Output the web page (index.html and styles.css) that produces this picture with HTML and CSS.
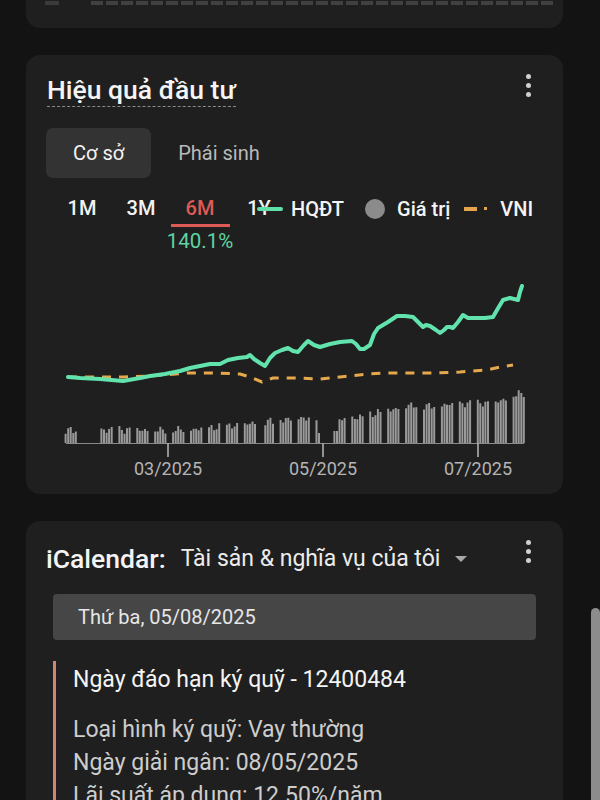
FILE: index.html
```html
<!DOCTYPE html>
<html lang="vi">
<head>
<meta charset="utf-8">
<title>Hiệu quả đầu tư</title>
<link rel="stylesheet" href="styles.css">
</head>
<body>
<div class="page">
  <section class="card card-prev">
    <div class="prev-strip"><span class="strip-a"></span><span class="strip-b"></span></div>
  </section>

  <section class="card perf">
    <div class="card-head">
      <h2 class="title">Hiệu quả đầu tư</h2>
      <div class="kebab"><i></i><i></i><i></i></div>
    </div>
    <div class="tabs">
      <div class="tab active">Cơ sở</div>
      <div class="tab">Phái sinh</div>
    </div>
    <div class="periods">
      <div class="period"><div class="lbl">1M</div></div>
      <div class="period"><div class="lbl">3M</div></div>
      <div class="period active"><div class="lbl">6M</div><div class="pct">140.1%</div></div>
      <div class="period"><div class="lbl">1Y</div></div>
      <div class="legend">
        <span class="lg-line"></span><span class="lg-text">HQĐT</span>
        <span class="lg-dot"></span><span class="lg-text">Giá trị</span>
        <span class="lg-dash"></span><span class="lg-small"></span><span class="lg-text">VNI</span>
      </div>
    </div>
    <svg class="chart" width="537" height="227" viewBox="26 253 537 227">
      <path id="bars" class="bars" d=""/>
      <line class="axis" x1="66" y1="443.5" x2="524" y2="443.5"/>
      <line class="tick" x1="168" y1="443" x2="168" y2="457"/>
      <line class="tick" x1="323" y1="443" x2="323" y2="457"/>
      <line class="tick" x1="478" y1="443" x2="478" y2="457"/>
      <text class="axis-label" x="168" y="475">03/2025</text>
      <text class="axis-label" x="323" y="475">05/2025</text>
      <text class="axis-label" x="478" y="475">07/2025</text>
      <polyline class="vni" points="68,377 100,377 123,377 150,376 187,373 215,373 240,374 250,377 262,382 273,378 300,378 320,379 340,377 367,374 387,373 410,373 433,373 460,372 487,370 500,367 513,365"/>
      <polyline class="hqdt" points="68,377 80,378 100,379 123,381 140,378 150,376 165,374 180,371 190,368 200,366 210,364 220,364 228,360 238,358 247,357 250,355 254,359 260,363 265,366 270,358 275,353 282,350 288,348 293,351 298,352 304,345 308,341 314,345 320,347 330,344 340,342 352,341 356,344 360,349 364,349 370,345 374,334 378,328 388,322 397,316 405,316 413,317 418,322 423,327 426,325 430,326 436,330 440,333 444,330 447,327 450,327 453,328 458,322 463,315 468,318 475,318 485,318 493,317 497,310 503,300 510,298 514,299 518,300 520,292 522,286"/>
    </svg>
  </section>

  <section class="card cal">
    <div class="card-head cal-head">
      <div class="cal-title">
        <h2 class="cal-name">iCalendar:</h2>
        <span class="cal-sub">Tài sản &amp; nghĩa vụ của tôi</span>
        <span class="caret"></span>
      </div>
      <div class="kebab"><i></i><i></i><i></i></div>
    </div>
    <div class="date-bar">Thứ ba, 05/08/2025</div>
    <div class="event">
      <div class="event-title">Ngày đáo hạn ký quỹ - 12400484</div>
      <div class="event-lines">
        <div>Loại hình ký quỹ: Vay thường</div>
        <div>Ngày giải ngân: 08/05/2025</div>
        <div>Lãi suất áp dụng: 12.50%/năm</div>
      </div>
    </div>
  </section>
</div>
<div class="scrollbar"></div>
<script src="script.js"></script>
</body>
</html>
```

FILE: styles.css
```css
* { box-sizing: border-box; margin: 0; padding: 0; }

html, body {
  background: #131313;
  width: 600px;
  height: 800px;
  overflow: hidden;
}

body {
  font-family: Roboto, "Noto Sans", "Liberation Sans", sans-serif;
  color: #f2f2f2;
}

.page {
  display: flex;
  flex-direction: column;
  gap: 27px;
  padding-left: 26px;
  width: 563px;
}

.card {
  background: #1f1f1f;
  border-radius: 14px;
  flex: none;
}

.card-prev {
  height: 28px;
  border-radius: 0 0 14px 14px;
}

.prev-strip {
  display: flex;
  gap: 32px;
  padding: 1px 0 0 19px;
  height: 5px;
}

.strip-a {
  width: 14px;
  background: #3a3a3a;
}

.strip-b {
  flex: 1;
  margin-right: 10px;
  background: repeating-linear-gradient(90deg, #404040 0 12px, transparent 12px 15px);
}

/* header */
.perf { padding: 18px 0 14px; }

.card-head {
  display: flex;
  justify-content: space-between;
  align-items: flex-start;
  padding: 0 32px 0 21px;
}

.title {
  font-size: 26.5px;
  font-weight: 500;
  line-height: 33px;
  border-bottom: 1px dashed #8a8a8a;
  color: #f4f4f4;
}

.kebab {
  display: flex;
  flex-direction: column;
  gap: 4px;
  padding-top: 1px;
}

.kebab i {
  display: block;
  width: 5px;
  height: 5px;
  border-radius: 50%;
  background: #d0d0d0;
}

/* tabs */
.tabs {
  display: flex;
  margin: 21px 0 0 20px;
}

.tab {
  height: 50px;
  line-height: 50px;
  padding: 0 27px;
  font-size: 20px;
  color: #b9b9b9;
  border-radius: 7px;
}

.tab.active {
  background: #333333;
  color: #f4f4f4;
}

/* periods */
.periods {
  position: relative;
  display: flex;
  align-items: flex-start;
  margin: 15px 0 0 26.5px;
  height: 60px;
}

.period {
  width: 59px;
  text-align: center;
  font-size: 20px;
  font-weight: 500;
  color: #f2f2f2;
}

.period .lbl {
  line-height: 31px;
  height: 34px;
}

.period.active .lbl {
  color: #df5a55;
  border-bottom: 3px solid #df5a55;
}

.pct {
  display: flex;
  justify-content: center;
  margin-top: 2px;
  line-height: 24px;
  font-size: 20.5px;
  font-weight: 400;
  color: #5fd49f;
  white-space: nowrap;
}

.legend {
  position: absolute;
  left: 204.5px;
  top: 0;
  height: 31px;
  display: flex;
  align-items: center;
  font-size: 20px;
  font-weight: 500;
  color: #f4f4f4;
  white-space: nowrap;
}

.lg-line {
  width: 26px;
  height: 4px;
  border-radius: 2px;
  background: #5fe0a8;
  margin-right: 8px;
}

.lg-dot {
  width: 20px;
  height: 20px;
  border-radius: 50%;
  background: #8b8b8b;
  margin: 0 12px 0 21px;
}

.lg-dash {
  width: 13px;
  height: 4px;
  background: #e3a64c;
  margin-left: 14px;
}

.lg-small {
  width: 3px;
  height: 3px;
  background: #e3a64c;
  margin: 0 13px 0 7px;
}

/* chart */
.chart {
  display: block;
}

.bars {
  stroke: #9a9a9a;
  stroke-width: 2;
  fill: none;
}

.axis {
  stroke: #8a8a8a;
  stroke-width: 1;
}

.tick {
  stroke: #b0b0b0;
  stroke-width: 1.6;
}

.axis-label {
  font-family: Roboto, "Noto Sans", sans-serif;
  font-size: 18px;
  fill: #b4b4b4;
  text-anchor: middle;
}

.hqdt {
  fill: none;
  stroke: #62e3ae;
  stroke-width: 4;
  stroke-linejoin: round;
  stroke-linecap: round;
}

.vni {
  fill: none;
  stroke: #e6a84c;
  stroke-width: 3;
  stroke-dasharray: 9 8;
  stroke-linejoin: round;
}

/* calendar card */
.cal {
  padding: 18px 0 0;
  height: 300px;
  border-radius: 14px 14px 0 0;
}

.cal-head {
  padding-right: 32px;
  padding-left: 20px;
}

.cal-title {
  display: flex;
  align-items: center;
  height: 38px;
}

.cal-name {
  font-size: 26.5px;
  font-weight: 500;
  color: #f4f4f4;
}

.cal-sub {
  font-size: 23px;
  color: #ececec;
  margin-left: 15px;
}

.caret {
  width: 0;
  height: 0;
  border-left: 6px solid transparent;
  border-right: 6px solid transparent;
  border-top: 6px solid #a8a8a8;
  margin-left: 15px;
  margin-top: 2px;
}

.date-bar {
  margin: 17px 27px 0;
  height: 46px;
  line-height: 46px;
  padding-left: 25px;
  background: #464646;
  border-radius: 4px;
  font-size: 20px;
  color: #e6e6e6;
}

.event {
  margin: 21px 27px 0;
  border-left: 3px solid #d4866a;
  padding-left: 17px;
}

.event-title {
  font-size: 23px;
  line-height: 38px;
  color: #f4f4f4;
}

.event-lines {
  margin-top: 14px;
  font-size: 23px;
  line-height: 33px;
  color: #cdcdcd;
}

.scrollbar {
  position: fixed;
  right: 0;
  top: 608px;
  width: 9px;
  height: 192px;
  background: #8c8c8c;
  border-radius: 5px 5px 0 0;
}
```

FILE: script.js
```js
(function () {
  var path = document.getElementById('bars');
  var x0 = 168, k = 2.56;
  var day = 86400000;
  var mar1 = Date.UTC(2025, 2, 1);
  var hol = ['2025-01-27', '2025-01-28', '2025-01-29', '2025-01-30', '2025-01-31',
             '2025-04-07', '2025-04-30', '2025-05-01', '2025-05-02'];
  var pts = [[66, 13], [150, 13], [200, 14], [240, 18], [260, 21], [300, 25], [345, 24],
             [362, 26], [380, 31], [395, 34], [410, 38], [430, 37], [455, 39], [495, 40],
             [505, 44], [512, 48], [524, 50]];
  function H(x) {
    for (var i = 1; i < pts.length; i++) {
      if (x <= pts[i][0]) {
        var a = pts[i - 1], b = pts[i];
        return a[1] + (b[1] - a[1]) * (x - a[0]) / (b[0] - a[0]);
      }
    }
    return 50;
  }
  var d = '';
  for (var t = Date.UTC(2025, 0, 20); t <= Date.UTC(2025, 6, 18); t += day) {
    var dt = new Date(t);
    var wd = dt.getUTCDay();
    if (wd === 0 || wd === 6) continue;
    var iso = dt.toISOString().slice(0, 10);
    if (hol.indexOf(iso) >= 0) continue;
    var x = x0 + (t - mar1) / day * k;
    var h = H(x) + 2.5 * Math.sin(x * 1.7) + 1.5 * Math.cos(x * 0.63);
    if (iso === '2025-04-29') h = 10;
    if (iso === '2025-05-05' || iso === '2025-05-06') h = 12;
    d += 'M' + x.toFixed(1) + ' 443V' + (443 - h).toFixed(1);
  }
  path.setAttribute('d', d);
})();
```
